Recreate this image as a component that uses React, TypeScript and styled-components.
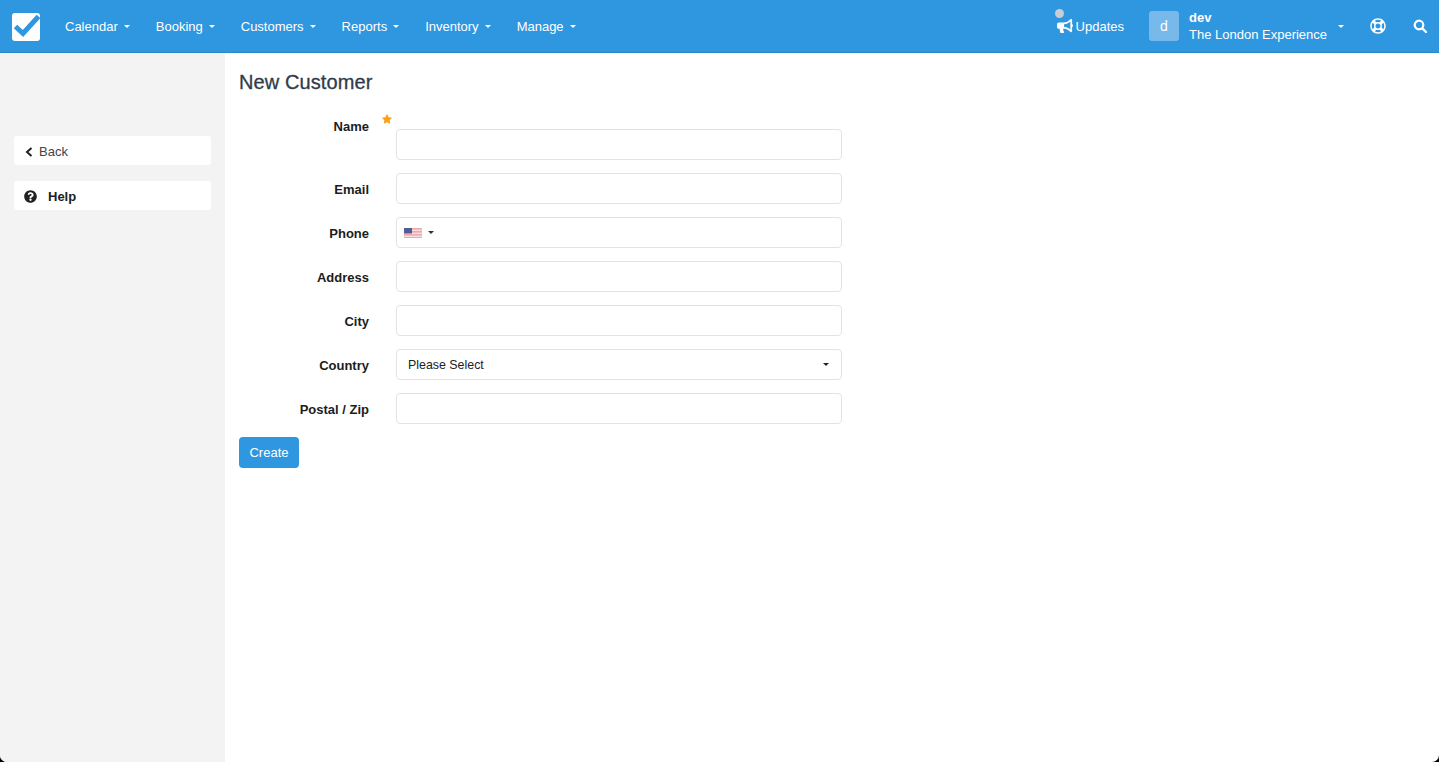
import React from "react";
import styled, { createGlobalStyle } from "styled-components";
import { FaBullhorn, FaRegLifeRing, FaQuestionCircle, FaStar } from "react-icons/fa";

const Global = createGlobalStyle`
  html, body { margin: 0; padding: 0; height: 100%; background: #000; }
  body { font-family: "Liberation Sans", Arial, sans-serif; font-size: 13px; overflow: hidden; }
  #root { height: 100%; }
  * { box-sizing: border-box; }
`;

const Shell = styled.div`
  width: 1439px;
  height: 762px;
  display: flex;
  flex-direction: column;
  background: #fff;
  border-radius: 0 0 7px 7px;
  overflow: hidden;
`;

const TopBar = styled.header`
  height: 53px;
  flex: none;
  display: flex;
  align-items: center;
  background: #2f96e0;
  border-bottom: 1px solid #2a86c9;
  color: #fff;
  padding-left: 12px;
`;

const Logo = styled.svg`
  width: 28px;
  height: 28px;
  margin-right: 25px;
  flex: none;
  position: relative;
  top: 1px;
`;

const Menu = styled.nav`
  display: flex;
  align-items: center;
  gap: 26px;
`;

const MenuItem = styled.span`
  display: flex;
  align-items: center;
  font-size: 13px;
  color: #fff;
  white-space: nowrap;
`;

const Caret = styled.i<{ $color?: string; $gap?: number }>`
  display: inline-block;
  width: 0;
  height: 0;
  margin-left: ${(p) => p.$gap ?? 6}px;
  border-top: 3px solid ${(p) => p.$color ?? "#fff"};
  border-left: 3px solid transparent;
  border-right: 3px solid transparent;
`;

const RightGroup = styled.div`
  margin-left: auto;
  display: flex;
  align-items: center;
  height: 100%;
`;

const Updates = styled.div`
  position: relative;
  display: flex;
  align-items: center;
  gap: 3px;
  font-size: 13px;
  margin-right: 25px;
`;

const Dot = styled.span`
  position: absolute;
  left: -2px;
  top: -9px;
  width: 9px;
  height: 9px;
  border-radius: 50%;
  background: #c6cdd3;
`;

const Avatar = styled.div`
  width: 30px;
  height: 30px;
  border-radius: 3px;
  background: #77b9eb;
  display: flex;
  align-items: center;
  justify-content: center;
  font-size: 14px;
  margin-right: 10px;
`;

const Account = styled.div`
  display: flex;
  flex-direction: column;
  gap: 2px;
  font-size: 13px;
  line-height: 15px;
  width: 144px;
  white-space: nowrap;
`;

const AccountName = styled.span`
  font-weight: 700;
  font-size: 13px;
`;

const AccountCaret = styled.span`
  margin-right: 26px;
  display: flex;
`;

const IconSlot = styled.span<{ $gap: number }>`
  display: flex;
  margin-right: ${(p) => p.$gap}px;
`;

const Body = styled.div`
  flex: 1;
  display: flex;
  min-height: 0;
`;

const Sidebar = styled.aside`
  width: 225px;
  flex: none;
  background: #f3f3f3;
  padding: 83px 14px 0 14px;
  display: flex;
  flex-direction: column;
  gap: 16px;
`;

const SideButton = styled.div<{ $bold?: boolean }>`
  height: 29px;
  background: #fff;
  border-radius: 3px;
  display: flex;
  align-items: center;
  padding: 2px 0 0 ${(p) => (p.$bold ? 10 : 11)}px;
  font-size: 13px;
  font-weight: ${(p) => (p.$bold ? 700 : 400)};
  color: ${(p) => (p.$bold ? "#222" : "#444")};
  gap: ${(p) => (p.$bold ? 11 : 6)}px;
`;

const Main = styled.main`
  flex: 1;
  padding: 18px 14px 0;
`;

const Title = styled.h1`
  margin: 0;
  font-size: 20px;
  line-height: 23px;
  font-weight: 400;
  letter-spacing: 0.1px;
  color: #2f3b4b;
  -webkit-text-stroke: 0.3px #2f3b4b;
`;

const Form = styled.form`
  margin-top: 23px;
  display: flex;
  flex-direction: column;
  gap: 13px;
  width: 603px;
`;

const Row = styled.div<{ $tall?: boolean }>`
  display: grid;
  grid-template-columns: 130px 27px 446px;
  align-items: ${(p) => (p.$tall ? "start" : "center")};
`;

const Label = styled.label`
  font-size: 13px;
  font-weight: 700;
  color: #1c1c1c;
  text-align: right;
  line-height: 15px;
  margin-top: 2px;
`;

const Star = styled.span`
  position: relative;
  grid-column: 2;
  height: 1px;
  color: #f9a11b;
`;

const StarPlace = styled.span`
  position: absolute;
  left: 13px;
  top: -3px;
  display: flex;
`;

const Field = styled.div<{ $tall?: boolean }>`
  grid-column: 3;
  height: 31px;
  margin-top: ${(p) => (p.$tall ? "12px" : "0")};
  border: 1px solid #e3e3e3;
  border-radius: 4px;
  background: #fff;
  display: flex;
  align-items: center;
  font-size: 13px;
  color: #222;
`;

const FlagBox = styled.span`
  display: flex;
  align-items: center;
  padding-left: 7px;
`;

const FlagIcon = styled.svg`
  width: 18px;
  height: 10px;
`;

const SelectText = styled.span`
  padding-left: 11px;
  flex: 1;
  font-size: 12.4px;
`;

const SelectCaret = styled.span`
  display: flex;
  padding-right: 12px;
`;

const CreateButton = styled.button`
  display: block;
  width: 60px;
  height: 31px;
  border: 0;
  border-radius: 4px;
  background: #2f96e0;
  color: #fff;
  font: 400 13px "Liberation Sans", Arial, sans-serif;
  padding: 0;
`;

const nav = ["Calendar", "Booking", "Customers", "Reports", "Inventory", "Manage"];

function Flag() {
  return (
    <FlagIcon viewBox="0 0 18 10">
      <rect width="18" height="10" fill="#eba9ae" />
      {[1.6, 4.6, 7.6].map((y) => (
        <rect key={y} y={y} width="18" height="1.4" fill="#f3dfe1" />
      ))}
      <rect width="8" height="5.500" fill="#555c94" />
    </FlagIcon>
  );
}

export default function App() {
  return (
    <>
      <Global />
      <Shell>
        <TopBar>
          <Logo viewBox="0 0 28 28">
            <rect width="28" height="28" rx="3" fill="#fff" />
            <path d="M3.500 13.500L11 20.500L26.500 3.500" fill="none" stroke="#2f96e0" strokeWidth="5" />
          </Logo>
          <Menu>
            {nav.map((n) => (
              <MenuItem key={n}>
                {n}
                <Caret />
              </MenuItem>
            ))}
          </Menu>
          <RightGroup>
            <Updates>
              <Dot />
              <FaBullhorn size={16} />
              Updates
            </Updates>
            <Avatar>d</Avatar>
            <Account>
              <AccountName>dev</AccountName>
              <span>The London Experience</span>
            </Account>
            <AccountCaret>
              <Caret $gap={5} />
            </AccountCaret>
            <IconSlot $gap={27}>
              <FaRegLifeRing size={16} />
            </IconSlot>
            <IconSlot $gap={12}>
              <svg width="14" height="14" viewBox="0 0 14 14">
                <circle cx="6" cy="6" r="4.300" fill="none" stroke="#fff" strokeWidth="2.200" />
                <path d="M9.300 9.300L13 13" stroke="#fff" strokeWidth="2.400" strokeLinecap="round" />
              </svg>
            </IconSlot>
          </RightGroup>
        </TopBar>
        <Body>
          <Sidebar>
            <SideButton>
              <svg width="8" height="10" viewBox="0 0 8 10">
                <path d="M6.500 1L2 5l4.500 4" fill="none" stroke="#222" strokeWidth="2" />
              </svg>
              Back
            </SideButton>
            <SideButton $bold>
              <FaQuestionCircle size={13} color="#222" />
              Help
            </SideButton>
          </Sidebar>
          <Main>
            <Title>New Customer</Title>
            <Form>
              <Row $tall>
                <Label>Name</Label>
                <Star>
                  <StarPlace>
                    <FaStar size={10} />
                  </StarPlace>
                </Star>
                <Field $tall />
              </Row>
              <Row>
                <Label>Email</Label>
                <Field />
              </Row>
              <Row>
                <Label>Phone</Label>
                <Field>
                  <FlagBox>
                    <Flag />
                    <Caret $color="#333" />
                  </FlagBox>
                </Field>
              </Row>
              <Row>
                <Label>Address</Label>
                <Field />
              </Row>
              <Row>
                <Label>City</Label>
                <Field />
              </Row>
              <Row>
                <Label>Country</Label>
                <Field>
                  <SelectText>Please Select</SelectText>
                  <SelectCaret>
                    <Caret $color="#222" />
                  </SelectCaret>
                </Field>
              </Row>
              <Row>
                <Label>Postal / Zip</Label>
                <Field />
              </Row>
              <CreateButton type="button">Create</CreateButton>
            </Form>
          </Main>
        </Body>
      </Shell>
    </>
  );
}
